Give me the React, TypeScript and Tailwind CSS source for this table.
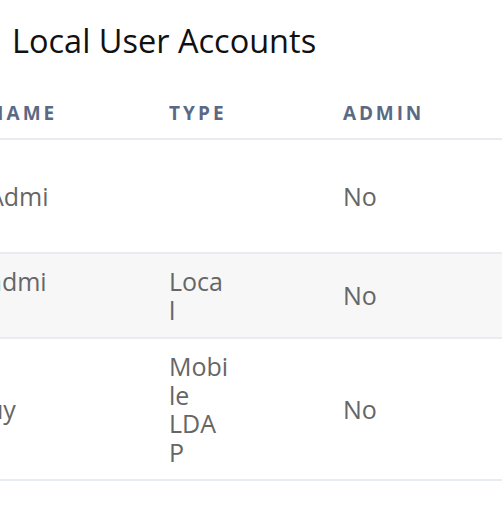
const rows = [
  { name: "Admi", type: "", admin: "No", bg: "bg-white", h: "h-[114px]", nameAlign: "align-middle" },
  { name: "admi", type: "Local", admin: "No", bg: "bg-[#f7f7f7]", h: "", nameAlign: "align-top" },
  { name: "uy", type: "Mobile LDAP", admin: "No", bg: "bg-white", h: "", nameAlign: "align-middle" },
];

export default function App() {
  return (
    <div className="w-[502px] h-[506px] overflow-hidden bg-white font-['Open_Sans',sans-serif]">
      {/* Title */}
      <h1 className="pt-[21px] pl-[12px] text-[32.5px] leading-[40px] font-normal text-[#111111]">
        Local User Accounts
      </h1>

      {/* Table, scrolled a little to the right */}
      <div className="mt-[26px] overflow-hidden">
        <table className="-ml-[12px] w-[526px] border-collapse table-fixed">
          <thead>
            <tr className="border-b-2 border-[#e8ecf0]">
              <th className="w-[181px] pt-[14px] pb-[13px] text-left text-[19px] leading-[24px] font-bold tracking-[0.16em] text-[#5b6a84]">
                NAME
              </th>
              <th className="w-[174px] pt-[14px] pb-[13px] text-left text-[19px] leading-[24px] font-bold tracking-[0.16em] text-[#5b6a84]">
                TYPE
              </th>
              <th className="pt-[14px] pb-[13px] text-left text-[19px] leading-[24px] font-bold tracking-[0.15em] text-[#5b6a84]">
                ADMIN
              </th>
            </tr>
          </thead>
          <tbody>
            {rows.map((r, i) => (
              <tr key={i} className={`${r.bg} border-b-2 border-[#e8ecf0] text-[25px] leading-[28.5px] text-[#666666]`}>
                <td className={`${r.h} ${r.nameAlign} py-[13px]`}>
                  <div className="w-[70px] [overflow-wrap:anywhere]">{r.name}</div>
                </td>
                <td className="py-[13px] align-middle">
                  <div className="w-[60px] [overflow-wrap:anywhere]">{r.type}</div>
                </td>
                <td className="py-[13px] align-middle">{r.admin}</td>
              </tr>
            ))}
          </tbody>
        </table>
      </div>
    </div>
  );
}
